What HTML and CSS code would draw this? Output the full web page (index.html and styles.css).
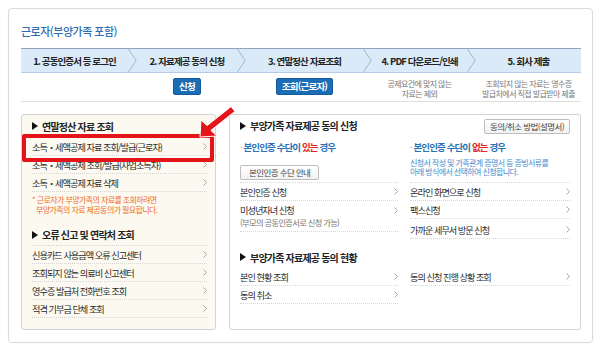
FILE: index.html
```html
<!DOCTYPE html>
<html lang="ko">
<head>
<meta charset="utf-8">
<title>근로자(부양가족 포함)</title>
<link rel="stylesheet" href="styles.css">
</head>
<body>
<div class="card">
  <h1 class="title">근로자(부양가족 포함)</h1>
  <div class="steps">
    <div class="step w1">1. 공동인증서 등 로그인</div>
    <svg class="chev" viewBox="0 0 9 25"><polyline points="0,0 8.5,12.5 0,25"/></svg>
    <div class="step w2">2. 자료제공 동의 신청</div>
    <svg class="chev" viewBox="0 0 9 25"><polyline points="0,0 8.5,12.5 0,25"/></svg>
    <div class="step w3">3. 연말정산 자료조회</div>
    <svg class="chev" viewBox="0 0 9 25"><polyline points="0,0 8.5,12.5 0,25"/></svg>
    <div class="step w4">4. PDF 다운로드/인쇄</div>
    <svg class="chev" viewBox="0 0 9 25"><polyline points="0,0 8.5,12.5 0,25"/></svg>
    <div class="step w5">5. 회사 제출</div>
  </div>
  <div class="substeps">
    <div class="sub w1"></div>
    <div class="sub-gap"></div>
    <div class="sub w2"><span class="btn-blue">신청</span></div>
    <div class="sub-gap"></div>
    <div class="sub w3"><span class="btn-blue">조회(근로자)</span></div>
    <div class="sub-gap"></div>
    <div class="sub w4"><p class="sub-note">공제요건에 맞지 않는<br>자료는 제외</p></div>
    <div class="sub-gap"></div>
    <div class="sub w5"><p class="sub-note">조회되지 않는 자료는 영수증<br>발급처에서 직접 발급받아 제출</p></div>
  </div>

  <div class="panels">
    <div class="panel panel-left">
      <div class="hd hd-line">연말정산 자료 조회</div>
      <div class="row"><span>소득・세액공제 자료 조회/발급(근로자)</span><svg class="arr" viewBox="0 0 4 7"><polyline points="0.5,0.5 3.5,3.5 0.5,6.5"/></svg></div>
      <div class="row"><span>소득・세액공제 조회/발급(사업소득자)</span><svg class="arr" viewBox="0 0 4 7"><polyline points="0.5,0.5 3.5,3.5 0.5,6.5"/></svg></div>
      <div class="row"><span>소득・세액공제 자료 삭제</span><svg class="arr" viewBox="0 0 4 7"><polyline points="0.5,0.5 3.5,3.5 0.5,6.5"/></svg></div>
      <p class="warn">* 근로자가 부양가족의 자료를 조회하려면<br>부양가족의 자료 제공동의가 필요합니다.</p>
      <div class="hd hd-line hd-second">오류 신고 및 연락처 조회</div>
      <div class="row"><span>신용카드 사용금액 오류 신고센터</span><svg class="arr" viewBox="0 0 4 7"><polyline points="0.5,0.5 3.5,3.5 0.5,6.5"/></svg></div>
      <div class="row"><span>조회되지 않는 의료비 신고센터</span><svg class="arr" viewBox="0 0 4 7"><polyline points="0.5,0.5 3.5,3.5 0.5,6.5"/></svg></div>
      <div class="row"><span>영수증 발급처 전화번호 조회</span><svg class="arr" viewBox="0 0 4 7"><polyline points="0.5,0.5 3.5,3.5 0.5,6.5"/></svg></div>
      <div class="row"><span>적격 기부금 단체 조회</span><svg class="arr" viewBox="0 0 4 7"><polyline points="0.5,0.5 3.5,3.5 0.5,6.5"/></svg></div>
      <div class="highlight"></div>
    </div>

    <div class="panel panel-right">
      <div class="hd-row">
        <div class="hd">부양가족 자료제공 동의 신청</div>
        <span class="btn-gray btn-guide">동의/취소 방법(설명서)</span>
      </div>
      <div class="cols">
        <div class="col col-a">
          <div class="top">
            <p class="case"><span class="dot">·</span> 본인인증 수단이 <em>있는</em> 경우</p>
            <span class="btn-gray btn-auth">본인인증 수단 안내</span>
          </div>
          <div class="row"><span>본인인증 신청</span><svg class="arr" viewBox="0 0 4 7"><polyline points="0.5,0.5 3.5,3.5 0.5,6.5"/></svg></div>
          <div class="row row-tall">
            <div class="row-text"><span>미성년자녀 신청</span><small>(부모의 공동인증서로 신청 가능)</small></div>
            <svg class="arr" viewBox="0 0 4 7"><polyline points="0.5,0.5 3.5,3.5 0.5,6.5"/></svg>
          </div>
        </div>
        <div class="col col-b">
          <div class="top">
            <p class="case"><span class="dot">·</span> 본인인증 수단이 <em>없는</em> 경우</p>
            <p class="info">신청서 작성 및 가족관계 증명서 등 증빙서류를<br>아래 방식에서 선택하여 신청합니다.</p>
          </div>
          <div class="row"><span>온라인 화면으로 신청</span><svg class="arr" viewBox="0 0 4 7"><polyline points="0.5,0.5 3.5,3.5 0.5,6.5"/></svg></div>
          <div class="row"><span>팩스신청</span><svg class="arr" viewBox="0 0 4 7"><polyline points="0.5,0.5 3.5,3.5 0.5,6.5"/></svg></div>
          <div class="row row-c"><span>가까운 세무서 방문 신청</span><svg class="arr" viewBox="0 0 4 7"><polyline points="0.5,0.5 3.5,3.5 0.5,6.5"/></svg></div>
        </div>
      </div>
      <div class="hd hd-status">부양가족 자료제공 동의 현황</div>
      <div class="cols">
        <div class="col col-a">
          <div class="row"><span>본인 현황 조회</span><svg class="arr" viewBox="0 0 4 7"><polyline points="0.5,0.5 3.5,3.5 0.5,6.5"/></svg></div>
          <div class="row"><span>동의 취소</span><svg class="arr" viewBox="0 0 4 7"><polyline points="0.5,0.5 3.5,3.5 0.5,6.5"/></svg></div>
        </div>
        <div class="col col-b">
          <div class="row"><span>동의 신청 진행 상황 조회</span><svg class="arr" viewBox="0 0 4 7"><polyline points="0.5,0.5 3.5,3.5 0.5,6.5"/></svg></div>
        </div>
      </div>
    </div>
  </div>
</div>

<svg class="pointer" viewBox="0 0 600 348">
  <polygon points="200,137 201,120 207.1,125.6 231.1,106.6 234.9,111.4 210.9,130.4 217,136"/>
</svg>
</body>
</html>
```

FILE: styles.css
```css
* {
  box-sizing: border-box;
  margin: 0;
  padding: 0;
}

body {
  margin: 0;
  padding: 8px;
  width: 600px;
  height: 348px;
  overflow: hidden;
  background: #fff;
  font-family: "Noto Sans CJK KR", "Noto Sans", sans-serif;
  color: #333;
  position: relative;
}

.card {
  width: 585px;
  height: 335px;
  border: 1px solid #dadada;
  border-radius: 4px;
  box-shadow: 0 0 2px rgba(0, 0, 0, 0.06);
  padding: 15px 11px 0 12px;
}

.title {
  font-size: 11px;
  line-height: 14px;
  height: 14px;
  font-weight: 500;
  color: #2d6db4;
  letter-spacing: -0.5px;
  margin-bottom: 10px;
}

/* steps */
.steps {
  display: flex;
  height: 25px;
  background: #dbeaf8;
  border-top: 1px solid #8fa6be;
  border-bottom: 1px solid #b4cde6;
}

.step {
  display: flex;
  align-items: center;
  justify-content: center;
  font-size: 9.5px;
  font-weight: 700;
  letter-spacing: -0.9px;
  color: #222;
  white-space: nowrap;
}

.w1 { width: 107px; }
.w2 { width: 100px; }
.w3 { width: 117px; }
.w4 { width: 95px; }
.w5 { width: 105px; }

.chev {
  width: 9px;
  height: 23px;
  flex: none;
}

.chev polyline {
  fill: none;
  stroke: #9ab3ce;
  stroke-width: 1;
}

.substeps {
  display: flex;
  height: 29px;
  border-bottom: 1px solid #dedede;
}

.sub {
  display: flex;
  justify-content: center;
  align-items: flex-start;
  padding-top: 5px;
  white-space: nowrap;
}

.sub-gap {
  width: 9px;
  flex: none;
}

.btn-blue {
  display: inline-block;
  height: 17px;
  line-height: 15px;
  padding: 0 5px;
  background: #1b6db4;
  border: 1px solid #125b9c;
  border-radius: 2px;
  color: #fff;
  font-size: 9.5px;
  font-weight: 700;
  letter-spacing: -0.8px;
}

.sub-note {
  font-size: 8px;
  line-height: 9.5px;
  color: #777;
  text-align: center;
  letter-spacing: -0.6px;
  padding-top: 1px;
}

/* panels */
.panels {
  display: flex;
  gap: 13px;
  margin-top: 12px;
  height: 216px;
}

.panel {
  border: 1px solid #d3d3d3;
  border-radius: 3px;
}

.panel-left {
  width: 195px;
  background: #fcfaf0;
  padding: 0 8px 0 10px;
  position: relative;
}

.panel-right {
  width: 352px;
  background: #fff;
  padding: 0 10px;
}

.hd {
  display: flex;
  align-items: center;
  height: 23px;
  font-size: 10px;
  font-weight: 700;
  color: #222;
  letter-spacing: -0.8px;
  white-space: nowrap;
}

.hd::before {
  content: "";
  width: 0;
  height: 0;
  border-left: 6px solid #111;
  border-top: 4px solid transparent;
  border-bottom: 4px solid transparent;
  margin-right: 4px;
}

.hd-line {
  border-bottom: 1px dotted #d6d6d6;
}

.hd-second {
  margin-top: 9px;
  height: 22px;
}

.row {
  display: flex;
  align-items: center;
  justify-content: space-between;
  height: 18px;
  border-bottom: 1px dotted #d6d6d6;
  font-size: 9.2px;
  letter-spacing: -1px;
  color: #2b2b2b;
  white-space: nowrap;
}

.arr {
  width: 4px;
  height: 7px;
  flex: none;
}

.arr polyline {
  fill: none;
  stroke: #9a9a9a;
  stroke-width: 0.9;
}

.warn {
  color: #ee6a2b;
  font-size: 8px;
  line-height: 10px;
  letter-spacing: -0.6px;
  padding-top: 3px;
  padding-left: 4px;
  text-indent: -4px;
  white-space: nowrap;
}

.highlight {
  position: absolute;
  left: 0;
  top: 19px;
  width: 192px;
  height: 28px;
  border: 4px solid #e5141b;
  border-radius: 2px;
}

/* right panel */
.hd-row {
  display: flex;
  justify-content: space-between;
  align-items: flex-start;
  height: 22px;
}

.hd-row .hd {
  height: 21px;
}

.btn-gray {
  display: inline-block;
  height: 15px;
  line-height: 13px;
  border: 1px solid #bdbdbd;
  border-radius: 2px;
  background: linear-gradient(#ffffff, #f1f1f1);
  font-size: 8.5px;
  color: #444;
  letter-spacing: -0.6px;
  white-space: nowrap;
}

.btn-guide {
  margin-top: 4px;
  padding: 0 5px;
}

.btn-auth {
  margin-top: 2px;
  padding: 0 8px;
}

.cols {
  display: flex;
  gap: 12px;
}

.col-a { width: 158px; }
.col-b { width: 160px; }

.top {
  height: 46px;
  border-bottom: 1px dotted #d6d6d6;
}

.case {
  height: 20px;
  line-height: 20px;
  font-size: 9.5px;
  font-weight: 700;
  color: #2a70b6;
  letter-spacing: -0.9px;
  white-space: nowrap;
}

.case em {
  font-style: normal;
  color: #e1261c;
}

.case .dot {
  color: #999;
  font-weight: 400;
}

.info {
  font-size: 8px;
  line-height: 9.6px;
  color: #3d8bd0;
  letter-spacing: -0.6px;
  white-space: nowrap;
  padding-top: 0.5px;
}

.row-tall {
  height: 31px;
  align-items: flex-start;
  padding-top: 3px;
}

.row-tall .arr {
  margin-top: 3px;
}

.row-text {
  display: flex;
  flex-direction: column;
}

.row-text span {
  line-height: 13px;
}

.row-text small {
  font-size: 8.3px;
  line-height: 10px;
  color: #777;
  letter-spacing: -0.7px;
}

.col-b .row-c {
  height: 20px;
  padding-top: 2px;
}

.hd-status {
  height: 29px;
  padding-top: 7px;
}

.pointer {
  position: absolute;
  left: 0;
  top: 0;
  width: 600px;
  height: 348px;
  pointer-events: none;
}

.pointer polygon {
  fill: #e5141b;
  stroke: #fff;
  stroke-width: 1;
  stroke-linejoin: round;
}
```
